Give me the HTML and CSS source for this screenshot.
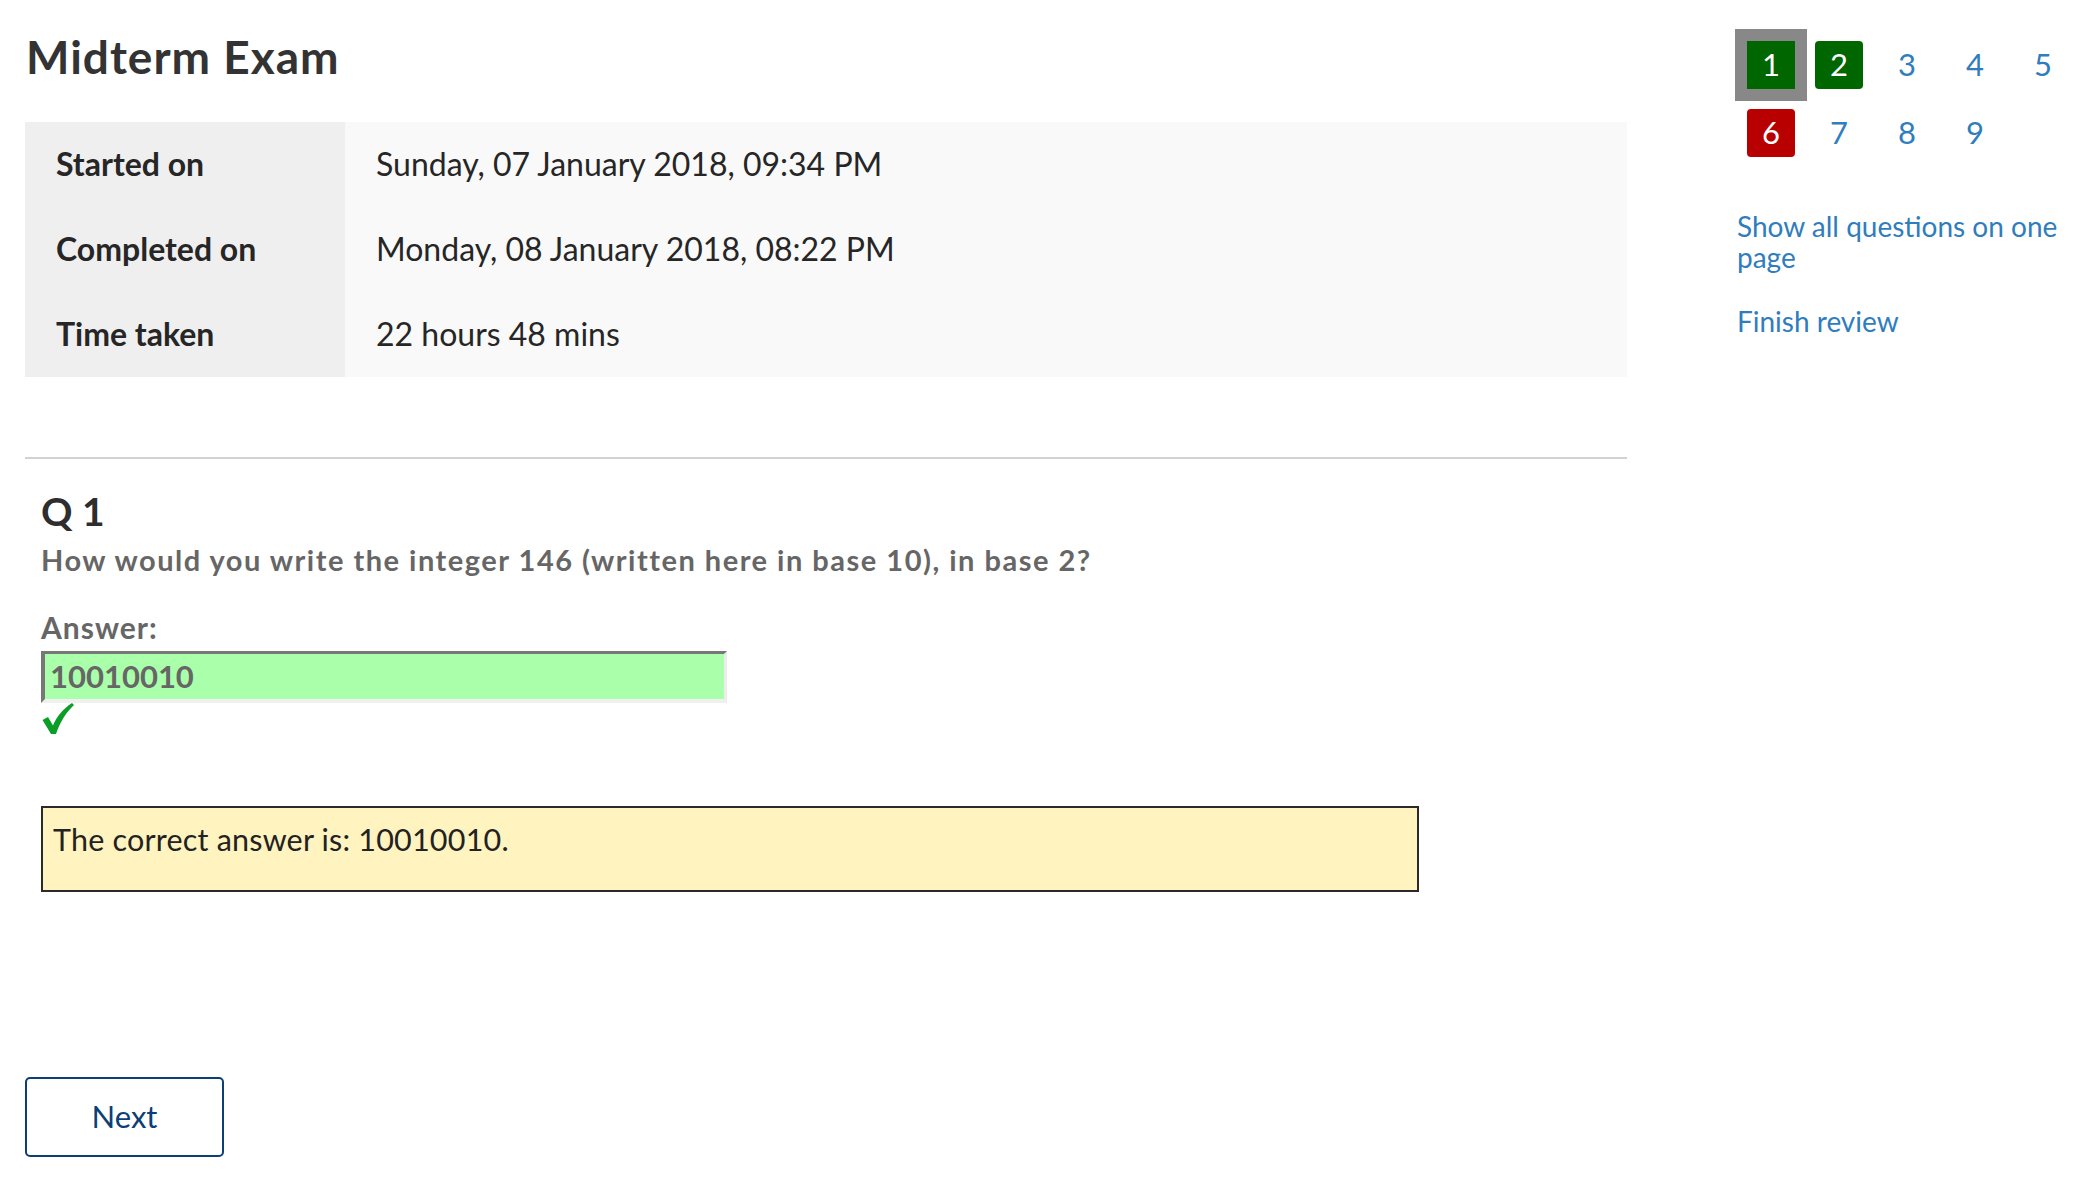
FILE: index.html
```html
<!DOCTYPE html>
<html lang="en">
<head>
<meta charset="utf-8">
<title>Midterm Exam</title>
<link rel="stylesheet" href="styles.css">
</head>
<body>
<div class="page">
  <main class="main">
    <h1 class="title">Midterm Exam</h1>
    <div class="summary">
      <div class="label">Started on</div>
      <div class="value">Sunday, 07 January 2018, 09:34 PM</div>
      <div class="label">Completed on</div>
      <div class="value">Monday, 08 January 2018, 08:22 PM</div>
      <div class="label">Time taken</div>
      <div class="value">22 hours 48 mins</div>
    </div>
    <hr class="divider">
    <section class="question">
      <h2 class="qno">Q 1</h2>
      <p class="qtext">How would you write the integer 146 (written here in base 10), in base 2?</p>
      <div class="answer-label">Answer:</div>
      <div class="answer-box">10010010</div>
      <svg class="check" width="32" height="32" viewBox="0 0 32 32" aria-hidden="true">
        <path d="M0.5 17 L6 14 L11 22.5 C15 13 21 6 30 0 L32 2 C24.5 9 18.5 18 14 31 L9 31 Z" fill="#0a9e26"/>
      </svg>
      <div class="feedback">The correct answer is: 10010010.</div>
    </section>
    <button class="next" type="button">Next</button>
  </main>
  <aside class="side">
    <div class="navgrid">
      <span class="qbtn correct current">1</span>
      <span class="qbtn correct">2</span>
      <span class="qbtn">3</span>
      <span class="qbtn">4</span>
      <span class="qbtn">5</span>
      <span class="qbtn wrong">6</span>
      <span class="qbtn">7</span>
      <span class="qbtn">8</span>
      <span class="qbtn">9</span>
    </div>
    <a class="sidelink first" href="#">Show all questions on one page</a>
    <a class="sidelink second" href="#">Finish review</a>
  </aside>
</div>
</body>
</html>
```

FILE: styles.css
```css
html, body {
  margin: 0;
  padding: 0;
  background: #ffffff;
}

body {
  font-family: "Lato", "Liberation Sans", sans-serif;
  color: #2b2b2b;
}

.page {
  display: flex;
  align-items: flex-start;
}

.main {
  margin-left: 25px;
  width: 1602px;
  display: flex;
  flex-direction: column;
  align-items: flex-start;
}

.title {
  margin: 29px 0 0 1px;
  font-size: 46px;
  line-height: 56px;
  font-weight: 700;
  letter-spacing: 1px;
  color: #333333;
}

.summary {
  margin-top: 37px;
  width: 100%;
  display: grid;
  grid-template-columns: 320px 1fr;
  grid-auto-rows: 85px;
}

.label,
.value {
  display: flex;
  align-items: center;
  padding-left: 31px;
  padding-bottom: 2px;
  font-size: 32px;
  color: #262626;
}

.label {
  background: #efefef;
  font-weight: 700;
}

.value {
  background: #f9f9f9;
  font-weight: 400;
}

.divider {
  width: 100%;
  margin: 80px 0 0 0;
  border: 0;
  border-top: 2px solid #d2d2d2;
  height: 0;
}

.question {
  padding-left: 16px;
  display: flex;
  flex-direction: column;
  align-items: flex-start;
}

.qno {
  margin: 29px 0 0 0;
  font-size: 39px;
  line-height: 47px;
  font-weight: 700;
  color: #2e2e2e;
}

.qtext {
  margin: 8px 0 0 0;
  font-size: 29px;
  line-height: 34px;
  font-weight: 700;
  letter-spacing: 1.5px;
  color: #666666;
}

.answer-label {
  margin-top: 32px;
  font-size: 30px;
  line-height: 36px;
  font-weight: 700;
  letter-spacing: 1px;
  color: #666666;
}

.answer-box {
  margin-top: 6px;
  box-sizing: border-box;
  width: 686px;
  height: 52px;
  border-top: 3px solid #777777;
  border-left: 4px solid #777777;
  border-right: 3px solid #ececec;
  border-bottom: 4px solid #f0f0f0;
  background: #aaffaa;
  padding-left: 5px;
  font-size: 31px;
  line-height: 45px;
  font-weight: 700;
  color: #666666;
}

.check {
  display: block;
  margin-top: 0;
  margin-left: 1px;
}

.feedback {
  margin-top: 71px;
  box-sizing: border-box;
  width: 1378px;
  height: 86px;
  border: 2px solid #2a2a2a;
  background: #fff3bf;
  padding: 13px 10px 0 10px;
  font-size: 30.5px;
  line-height: 36px;
  letter-spacing: 0.2px;
  color: #222222;
}

.next {
  margin-top: 185px;
  width: 199px;
  height: 80px;
  box-sizing: border-box;
  border: 2px solid #0b3f76;
  border-radius: 5px;
  background: #ffffff;
  color: #0b3f76;
  font-family: "Lato", "Liberation Sans", sans-serif;
  font-size: 31px;
  padding: 0 0 2px 0;
}

.side {
  margin-left: 120px;
  width: 330px;
  display: flex;
  flex-direction: column;
  align-items: flex-start;
}

.navgrid {
  margin-top: 41px;
  display: grid;
  grid-template-columns: repeat(5, 48px);
  grid-auto-rows: 48px;
  column-gap: 20px;
  row-gap: 20px;
}

.qbtn {
  display: flex;
  align-items: center;
  justify-content: center;
  padding-bottom: 2px;
  box-sizing: border-box;
  font-size: 31px;
  color: #2f7dbd;
  border-radius: 4px;
}

.qbtn.correct {
  background: #006600;
  color: #ffffff;
}

.qbtn.wrong {
  background: #b80000;
  color: #ffffff;
}

.qbtn.current {
  border-radius: 0;
  outline: 12px solid #888888;
}

.sidelink {
  display: block;
  font-size: 28px;
  line-height: 31px;
  color: #2f7dbd;
  text-decoration: none;
  margin-left: -10px;
}

.sidelink.first {
  margin-top: 54px;
}

.sidelink.second {
  margin-top: 33px;
}
```
